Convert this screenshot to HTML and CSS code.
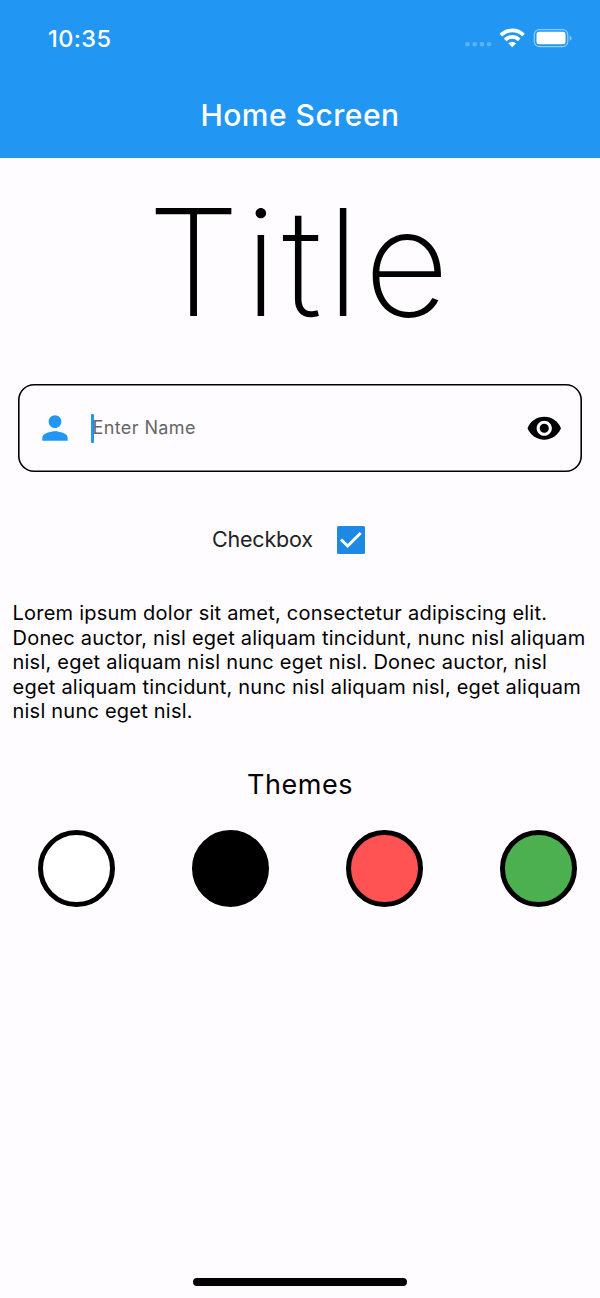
FILE: index.html
```html
<!DOCTYPE html>
<html lang="en">
<head>
<meta charset="utf-8">
<title>Home Screen</title>
<link rel="stylesheet" href="styles.css">
</head>
<body>
<header class="header">
  <div class="status">
    <span class="time">10:35</span>
    <svg class="status-icons" width="108" height="22" viewBox="0 0 108 22">
      <g fill="#fff" opacity=".28"><circle cx="3.5" cy="17.200" r="2.3"/><circle cx="10.700" cy="17.200" r="2.3"/><circle cx="17.900" cy="17.200" r="2.3"/><circle cx="25.100" cy="17.200" r="2.3"/></g>
      <g fill="none" stroke="#fff" stroke-width="3.800"><path d="M36.900 8.100a16 16 0 0 1 22.600 0"/><path d="M41.200 12.800a10 10 0 0 1 14 0"/></g>
      <path fill="#fff" d="M44.300 16.300a5.600 5.600 0 0 1 7.800 0L48.200 20.300z"/>
      <rect x="70.300" y="2.600" width="33.500" height="17" rx="5" fill="none" stroke="#fff" stroke-opacity=".5" stroke-width="1.2"/>
      <rect x="72.500" y="4.800" width="29" height="12.500" rx="2.500" fill="#fff"/>
      <path d="M105.600 8.800v5q2-.8 2-2.500t-2-2.500z" fill="#fff" opacity=".5"/>
    </svg>
  </div>
  <h1 class="app-title">Home Screen</h1>
</header>
<main class="content">
  <div class="display">Title</div>
  <div class="field">
    <svg class="person" width="38" height="38" viewBox="0 0 24 24"><path fill="#2196f3" d="M12 12c2.21 0 4-1.79 4-4s-1.79-4-4-4-4 1.79-4 4 1.79 4 4 4zm0 2c-2.67 0-8 1.34-8 4v2h16v-2c0-2.66-5.33-4-8-4z"/></svg>
    <span class="caret"></span>
    <span class="hint">Enter Name</span>
    <svg class="eye" width="36.500" height="36.500" viewBox="0 0 24 24"><path d="M12 4.500C7 4.500 2.730 7.610 1 12c1.730 4.390 6 7.500 11 7.500s9.270-3.110 11-7.500c-1.730-4.390-6-7.500-11-7.500zM12 17c-2.760 0-5-2.240-5-5s2.240-5 5-5 5 2.240 5 5-2.240 5-5 5zm0-8c-1.660 0-3 1.340-3 3s1.340 3 3 3 3-1.340 3-3-1.340-3-3-3z"/></svg>
  </div>
  <div class="check-row">
    <span class="check-label">Checkbox</span>
    <svg width="28" height="28" viewBox="0 0 28 28"><rect width="28" height="28" rx="1.500" fill="#1e88e5"/><path d="M4 13.500l6.700 6.500L23.700 7" fill="none" stroke="#fff" stroke-width="3"/></svg>
  </div>
  <p class="body-text">Lorem ipsum dolor sit amet, consectetur adipiscing elit.<br>Donec auctor, nisl eget aliquam tincidunt, nunc nisl aliquam<br>nisl, eget aliquam nisl nunc eget nisl. Donec auctor, nisl<br>eget aliquam tincidunt, nunc nisl aliquam nisl, eget aliquam<br>nisl nunc eget nisl.</p>
  <h2 class="themes-title">Themes</h2>
  <div class="themes">
    <span class="swatch light"></span><span class="swatch dark"></span><span class="swatch red"></span><span class="swatch green"></span>
  </div>
</main>
<footer class="home"></footer>
</body>
</html>
```
FILE: styles.css
```css
* { box-sizing: border-box; }
body { margin: 0; height: 1298px; display: flex; flex-direction: column; background: #fffcff; color: #000; font-family: Inter, "Liberation Sans", sans-serif; overflow: hidden; }
.header { height: 158px; flex: none; background: #2196f3; color: #fff; }
.status { height: 76px; padding: 0 28px 0 48px; display: flex; align-items: center; justify-content: space-between; }
.time { font-size: 23.5px; font-weight: 500; letter-spacing: .4px; }
.app-title { margin: 0; height: 78px; line-height: 78px; text-align: center; font-size: 30px; font-weight: 500; letter-spacing: .5px; }
.content { flex: 1; display: flex; flex-direction: column; }
.display { height: 226px; line-height: 210px; text-align: center; font-size: 148px; font-weight: 200; letter-spacing: 4.5px; text-indent: 1px; white-space: nowrap; }
.field { height: 88px; margin: 0 18px; padding: 0 20px 0 18px; flex: none; border-radius: 16px; box-shadow: inset 0 0 0 1.6px #000; display: flex; align-items: center; }
.caret { width: 3px; height: 29px; margin-left: 17px; background: #2196f3; border-radius: 1px; }
.hint { flex: 1; margin: -2px 0 0 -1.5px; font-size: 18px; color: #666; letter-spacing: .4px; }
.check-row { height: 28px; margin-top: 54px; padding-left: 212px; display: flex; align-items: center; }
.check-label { width: 125px; margin-top: -2px; font-size: 21.5px; color: #222; letter-spacing: -.2px; }
.body-text { margin: 47px 0 0 12.5px; font-size: 20px; line-height: 24.6px; letter-spacing: .225px; white-space: nowrap; }
.themes-title { margin: 43px 0 0; line-height: 36px; text-align: center; font-size: 27px; font-weight: 400; letter-spacing: .5px; }
.themes { margin: 27px 23px 0 38px; display: flex; justify-content: space-between; }
.swatch { width: 77px; height: 77px; border: 5px solid #000; border-radius: 50%; }
.light { background: #fff; }
.dark { background: #000; }
.red { background: #ff5252; }
.green { background: #4caf50; }
.home { width: 214px; height: 8px; margin: 0 auto 12px; border-radius: 4px; background: #000; flex: none; }
```
